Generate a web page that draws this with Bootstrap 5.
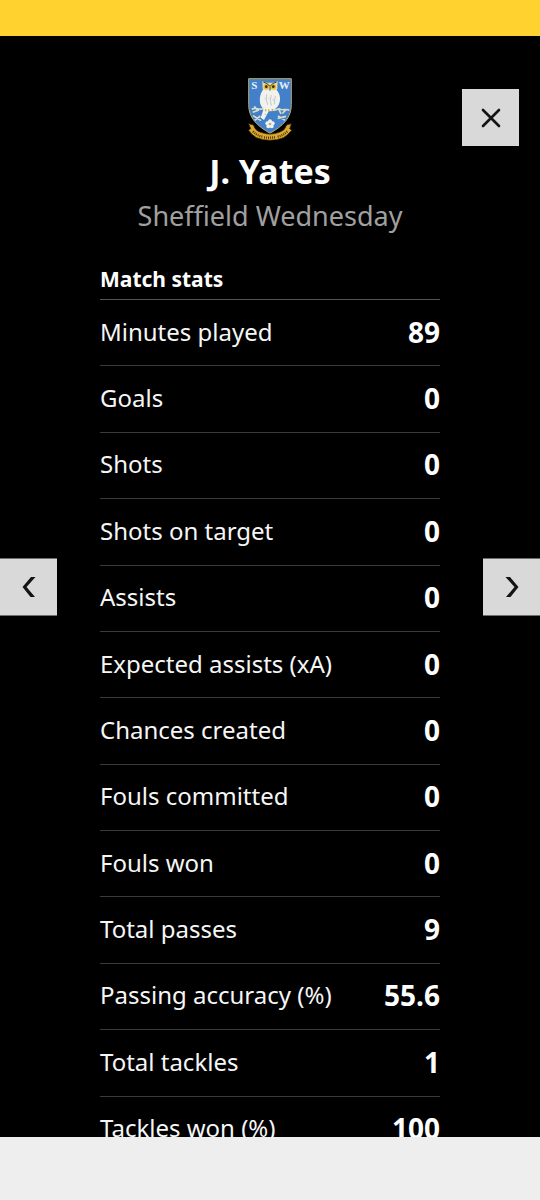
<!DOCTYPE html>
<html lang="en">
<head>
<meta charset="utf-8">
<meta name="viewport" content="width=device-width, initial-scale=1">
<title>J. Yates – Match stats</title>
<link href="https://cdn.jsdelivr.net/npm/bootstrap@5.3.0/dist/css/bootstrap.min.css" rel="stylesheet">
<style>
  body { font-family: "Noto Sans", sans-serif; background: #000; }
  .top-strip { height: 36px; background: #ffd230; }
  .bottom-strip { height: 63px; background: #eee; }
  .panel { min-height: 0; background: #000; color: #f6f6f6; }
  .player { padding-top: 34px; }
  .player h1 { font-size: 34px; line-height: 40px; margin: 6px 0 0; font-weight: 700; color: #fff; }
  .player p { font-size: 27px; line-height: 36px; margin: 7px 0 0; color: #a0a0a0; }
  .stats { margin: 27px 100px 0; }
  .stats h2 { font-size: 21px; line-height: 36px; margin: 0; padding-bottom: 2px; font-weight: 700; color: #fff; }
  .stat-table { height: 864px; border-top: 1px solid #555; }
  .stat-table th, .stat-table td { padding: 0 0 2px; vertical-align: middle; border-bottom: 1px solid #3a3a3a; line-height: 32px; }
  .stat-table th { font-size: 24px; font-weight: 400; }
  .stat-table td { font-size: 28px; font-weight: 700; text-align: right; color: #fff; }
  .tool { width: 57px; height: 57px; background: #d9d9d9; border: 0; padding: 0; color: #141414; display: flex; align-items: center; justify-content: center; }
  .tool-close { top: 53px; right: 21px; }
</style>
</head>
<body class="vh-100 overflow-hidden d-flex flex-column">
<div class="top-strip flex-shrink-0"></div>
<main class="panel flex-grow-1 overflow-hidden position-relative">
  <header class="player text-center">
    <svg class="d-block mx-auto" width="70" height="75" viewBox="0 0 210 225" role="img" aria-label="Sheffield Wednesday crest">
      <path d="M41 26H169V104C169 146 142 168 105 190C68 168 41 146 41 104Z" fill="#4280ca" stroke="#b8a873" stroke-width="3"/>
      <g fill="#e8eef5" font-family="Liberation Serif, serif" font-weight="700" font-size="33">
        <text x="49" y="56">S</text><text x="131" y="56">W</text>
      </g>
      <path d="M50 118C62 110 72 121 84 116C100 124 118 122 132 116C142 124 154 114 163 121M53 127L72 120M58 109L66 120M142 130L153 119M132 119L138 132" fill="none" stroke="#d9dcc8" stroke-width="5"/>
      <path d="M82 62C70 82 73 108 86 116L77 143L87 150L102 122C122 122 137 104 135 83C134 70 128 62 122 56L86 56Z" fill="#f1f2ed"/>
      <path d="M82 33Q91 40 105 38Q119 40 128 33L127 58Q116 65 105 57Q94 65 83 57Z" fill="#eadca0"/>
      <circle cx="94" cy="50" r="8" fill="#e8b92b"/><circle cx="115" cy="50" r="8" fill="#e8b92b"/>
      <circle cx="94" cy="50" r="4" fill="#242c22"/><circle cx="115" cy="50" r="4" fill="#242c22"/>
      <path d="M85 36Q97 39 105 49Q112 39 125 36M105 50V62" fill="none" stroke="#45432e" stroke-width="3"/>
      <path d="M95 73Q91 89 98 104M109 75Q103 91 109 107M121 78Q118 93 118 103M89 84L94 89M99 83L104 88M112 88L118 92M88 132L95 135" fill="none" stroke="#a9b6bd" stroke-width="2"/>
      <path d="M92 118V124M101 118V124M112 117V123" stroke="#d9ac37" stroke-width="4"/>
      <g fill="#eef2f2"><circle cx="105" cy="154" r="6"/><circle cx="113" cy="160" r="6"/><circle cx="110" cy="169" r="6"/><circle cx="100" cy="169" r="6"/><circle cx="97" cy="160" r="6"/></g>
      <circle cx="105" cy="162" r="4" fill="#d4ae31"/>
      <path d="M54 137L78 152M76 138L59 151M128 145L153 139M129 138L150 151" stroke="#d9dcc8" stroke-width="5"/>
      <path d="M41 161L55 165Q60 182 77 187Q105 198 133 187Q150 182 155 165L169 161L164 176L170 181Q158 196 145 203Q105 218 65 203Q50 196 41 181L47 176Z" fill="#dca82e" stroke="#3e2d0c" stroke-width="2"/>
      <path d="M54 184Q64 196 82 200M87 202Q105 205 122 201M128 200Q145 196 157 184" fill="none" stroke="#51400e" stroke-width="7" stroke-dasharray="3 3"/>
    </svg>
    <h1>J. Yates</h1>
    <p>Sheffield Wednesday</p>
  </header>
  <section class="stats">
    <h2 id="stats-title">Match stats</h2>
    <table class="stat-table w-100" aria-labelledby="stats-title">
      <tbody>
        <tr><th scope="row">Minutes played</th><td>89</td></tr>
        <tr><th scope="row">Goals</th><td>0</td></tr>
        <tr><th scope="row">Shots</th><td>0</td></tr>
        <tr><th scope="row">Shots on target</th><td>0</td></tr>
        <tr><th scope="row">Assists</th><td>0</td></tr>
        <tr><th scope="row">Expected assists (xA)</th><td>0</td></tr>
        <tr><th scope="row">Chances created</th><td>0</td></tr>
        <tr><th scope="row">Fouls committed</th><td>0</td></tr>
        <tr><th scope="row">Fouls won</th><td>0</td></tr>
        <tr><th scope="row">Total passes</th><td>9</td></tr>
        <tr><th scope="row">Passing accuracy (%)</th><td>55.6</td></tr>
        <tr><th scope="row">Total tackles</th><td>1</td></tr>
        <tr><th scope="row">Tackles won (%)</th><td>100</td></tr>
      </tbody>
    </table>
  </section>
  <button type="button" class="tool tool-close position-absolute" aria-label="Close">
    <svg width="57" height="57" viewBox="0 0 57 57" fill="none" stroke="currentColor" stroke-width="2.6" stroke-linecap="round"><path d="M21 21L37 37M37 21L21 37"/></svg>
  </button>
  <button type="button" class="tool position-absolute start-0 top-50 translate-middle-y" aria-label="Previous player">
    <svg width="57" height="57" viewBox="0 0 57 57" fill="currentColor"><path d="M31 18.500H35.500L26.500 28.500L35 38.500H30.500L22.500 28.500Z"/></svg>
  </button>
  <button type="button" class="tool position-absolute end-0 top-50 translate-middle-y" aria-label="Next player">
    <svg width="57" height="57" viewBox="0 0 57 57" fill="currentColor"><path d="M27 18.500H22.500L31.500 28.500L23 38.500H27.500L35.500 28.500Z"/></svg>
  </button>
</main>
<div class="bottom-strip flex-shrink-0"></div>
<script src="https://cdn.jsdelivr.net/npm/bootstrap@5.3.0/dist/js/bootstrap.bundle.min.js"></script>
</body>
</html>
